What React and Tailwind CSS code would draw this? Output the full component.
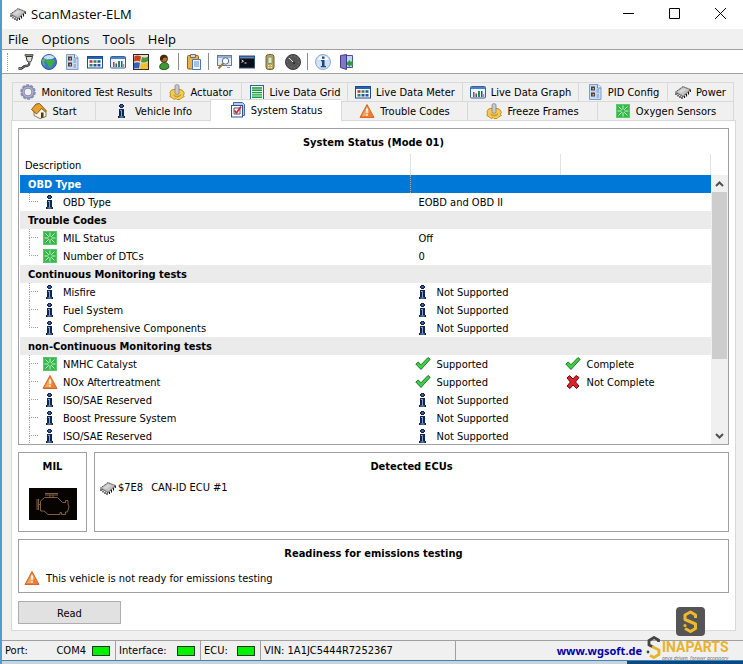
import { useState } from 'react';
import clsx from 'clsx';

const ChipIcon = () => (
  <svg width="16" height="16" viewBox="0 0 16 16" className="shrink-0">
    <path d="M1 9v2M3 10.500v2M5 12v2M7 13v2M9.500 12v2M11.500 10v2.500M13.500 8v2.500M15.300 5.500v2.500" stroke="#111" strokeWidth="1.100" />
    <path d="M.5 8 8 2.500 15.500 5.500 8 13z" fill="#8d8d8d" stroke="#2b2b2b" strokeWidth=".8" strokeDasharray="1.200 .8" />
    <path d="M1.500 8 8 3.200 14.500 5.700 8 11.500z" fill="#c4c4c4" />
    <path d="M3 8 8 4.500 11 5.500 6 9z" fill="#d8d8d8" />
  </svg>
);

const PlugIcon = () => (
  <svg width="16" height="16" viewBox="0 0 16 16">
    <path d="M7 .5h8v1.500H7z" fill="#bdbbae" stroke="#444" strokeWidth=".8" />
    <path d="M8 2.500h6.500L13.500 6.500 12.500 8h-2.500L9 6.500z" fill="#dedccf" stroke="#333" />
    <path d="M11.300 8.500c0 3-1 3.500-4 3.500-2 0-2 2-4 2.500H.5" fill="none" stroke="#222" strokeWidth="2.400" />
    <path d="M11.300 8.500c0 3-1 3.500-4 3.500-2 0-2 2-4 2.500H1" fill="none" stroke="#aaa" strokeWidth=".8" />
  </svg>
);

const GlobeIcon = () => (
  <svg width="16" height="16" viewBox="0 0 16 16">
    <circle cx="8" cy="8" r="7.500" fill="#3d74d6" stroke="#35569a" />
    <path d="M2.500 4c2-3.500 8-4 11-.5L11 5 6 5.500z" fill="#c9def8" />
    <path d="M5 6.500 8 5.500l5 .5 1 1.500-2 2-2 4.500-2-.5L7 10.500 5 8.500z" fill="#3fae3b" />
    <path d="M1 6l2-1.500 1.500 1L3 8l1.500 4L2 10.500z" fill="#58c04a" />
  </svg>
);

const DocIcon = () => (
  <svg width="16" height="16" viewBox="0 0 16 16" className="shrink-0">
    <path d="M2.500.5h8.500l3 3v12H2.500z" fill="#c7dcf3" stroke="#7f9fc8" />
    <path d="M10.500.5v3.500h3.500" fill="#fff" stroke="#5f86b5" />
    <path d="M4 2.500h4v4H4zM4 8.500h4v4H4z" fill="#4d4040" />
    <path d="M5.500 4h1.500v1.500H5.500zM5.500 10h1.500v1.500H5.500z" fill="#e5a590" />
    <path d="M9.500 6H12M9.500 8H12M9.500 11H12M9.500 13H12" stroke="#6d94c4" />
  </svg>
);

const MeterIcon = () => (
  <svg width="16" height="16" viewBox="0 0 16 16" className="shrink-0">
    <rect x=".5" y="2.500" width="15" height="11.500" fill="#f6f9fd" stroke="#1d4a8c" />
    <path d="M1 3h14v2H1z" fill="#2a62b4" />
    <path d="M2.500 6.200h3v2.600h-3z" fill="#c23b32" />
    <path d="M6.500 6.200h3v2.600h-3zM2.500 10h3v2.600h-3z" fill="#2b8a5c" />
    <path d="M10.500 6.200h3v2.600h-3zM6.500 10h3v2.600h-3zM10.500 10h3v2.600h-3z" fill="#27549c" />
  </svg>
);

const GraphIcon = () => (
  <svg width="16" height="16" viewBox="0 0 16 16" className="shrink-0">
    <rect x=".5" y="2.500" width="15" height="11.500" rx="1" fill="#eef4fb" stroke="#355f9b" />
    <path d="M1 3h14v2H1z" fill="#4f82c4" />
    <path d="M3 8h1.500v5H3z" fill="#c23b32" />
    <path d="M5.500 9.500H7V13H5.500zM11 7h1.500v6H11z" fill="#27549c" />
    <path d="M8 7h2v6H8z" fill="#2b8a3c" />
    <path d="M13 10h1.200v3H13z" fill="#d19020" />
  </svg>
);

const FlagIcon = () => (
  <svg width="16" height="16" viewBox="0 0 16 16">
    <rect x=".5" y=".5" width="15" height="15" fill="#e9dfc6" stroke="#2e2620" />
    <path d="M1.500 2c2.500-1 4.500-.5 6.500.5L7 7.500C5 6.500 3.500 6.500 1 7.500z" fill="#c9401f" />
    <path d="M9 3c2 1 4 1 6-.5V7c-2 1.500-4.500 2-7 1z" fill="#4d9a35" />
    <path d="M1 9c2.500-1 4-1 6 0l-1 5.500c-2-.5-3-.5-5 0z" fill="#2f62b8" />
    <path d="M8 9c2.500 1 5 .5 7-1v6.500c-3 1-5 1-8 0z" fill="#efc02c" />
  </svg>
);

const UserIcon = () => (
  <svg width="16" height="16" viewBox="0 0 16 16">
    <path d="M4 14.500c-1-4 1.500-6 4.500-6s5 2 4 5.500c-2 2-6.500 2-8.500.5z" fill="#3f9a35" stroke="#1f5a1d" />
    <circle cx="8" cy="4.800" r="3.500" fill="#b5723a" stroke="#5a2f12" />
    <path d="M4 6C3.500 2 6 .5 8.500.7 11 1 12 3 11 4 9 3 7 3 6.500 6.500z" fill="#4a2710" />
  </svg>
);

const ClipboardIcon = () => (
  <svg width="16" height="16" viewBox="0 0 16 16">
    <rect x="1.500" y="1.500" width="11" height="13.500" rx="1" fill="#efb23f" stroke="#946014" />
    <path d="M4.500.5h5v3h-5z" fill="#d7d7d7" stroke="#6e6e6e" />
    <path d="M6.500 5.500h8v10h-8z" fill="#eef4fc" stroke="#4a74ad" />
    <path d="M8 8h5M8 10h5M8 12h5" stroke="#5f8ecb" />
  </svg>
);

const MonitorSearchIcon = () => (
  <svg width="16" height="16" viewBox="0 0 16 16">
    <rect x="1.500" y="1.500" width="14" height="10" fill="#dfeaf4" stroke="#6a7b8c" />
    <path d="M2 2h13v2H2z" fill="#8fb2d6" />
    <circle cx="9.500" cy="7" r="3.200" fill="#f4fbff" stroke="#5b6f85" />
    <path d="M7.300 9.500 2.500 14.500" stroke="#9a7b45" strokeWidth="2" />
    <path d="M11 13.500h3" stroke="#8a98a6" />
  </svg>
);

const TerminalIcon = () => (
  <svg width="16" height="16" viewBox="0 0 16 16">
    <rect x=".5" y="2" width="15" height="12" fill="#0c1119" stroke="#33507c" />
    <path d="M1 2.500h14v2H1z" fill="#5a86c4" />
    <path d="m2.500 6 2 1.200-2 1.200M5.500 9h2" fill="none" stroke="#e5e5e5" />
  </svg>
);

const PhoneIcon = () => (
  <svg width="16" height="16" viewBox="0 0 16 16">
    <rect x="4" y=".5" width="8" height="15" rx="2.500" fill="#b9a565" stroke="#6d5d2b" />
    <rect x="6" y="3" width="4" height="6.500" rx="1" fill="#dbe9cf" stroke="#6c8a55" strokeWidth=".8" />
    <path d="M6 11.500h4M6 13.500h4" stroke="#efe4b8" strokeDasharray="1.500 1" />
  </svg>
);

const GaugeIcon = () => (
  <svg width="16" height="16" viewBox="0 0 16 16">
    <circle cx="8" cy="8" r="7.500" fill="#555" stroke="#3a3a3a" />
    <circle cx="8" cy="8" r="5.800" fill="none" stroke="#858585" strokeDasharray="1 2.500" />
    <path d="m4 4 5 5" stroke="#e6e6e6" />
    <circle cx="9" cy="9" r="1.200" fill="#333" />
  </svg>
);

const InfoCircleIcon = () => (
  <svg width="16" height="16" viewBox="0 0 16 16">
    <circle cx="8" cy="8" r="7.500" fill="#cfe1f2" stroke="#93abc4" />
    <path d="M2.500 5.500c2-5 9-5 11 0-3 1-8 1-11 0z" fill="#f5faff" />
    <path d="M7 2.500h2.500v2.300H7zM6 6h3.500v6H11v1.200H5.800V12H7V7.200H6z" fill="#1c4587" />
  </svg>
);

const ExitIcon = () => (
  <svg width="16" height="16" viewBox="0 0 16 16">
    <path d="M6.500 1.500h8v12h-8z" fill="#bcd5f0" stroke="#4b4d9c" />
    <path d="m2.500 1.500 6-1v15l-6-2z" fill="#8177c6" stroke="#433b86" />
    <path d="M9 8.500 12 6v1.500h3v4h-3V13l-3-2.500z" fill="#2f9b3a" />
  </svg>
);

const GearIcon = () => (
  <svg width="16" height="16" viewBox="0 0 16 16" className="shrink-0">
    <circle cx="8" cy="8" r="6.800" fill="none" stroke="#8d92b4" strokeWidth="2" strokeDasharray="3 1.270" />
    <circle cx="8" cy="8" r="5" fill="none" stroke="#8489ad" strokeWidth="3.400" />
    <circle cx="8" cy="8" r="4.800" fill="none" stroke="#a9aecd" strokeWidth="1.600" />
  </svg>
);

const ActuatorIcon = () => (
  <svg width="16" height="16" viewBox="0 0 16 16" className="shrink-0">
    <path d="m1 8.500 1.500-2.500L5 5.500 8 5l3 .5 2.500.8L15.300 9l-.8 2.500.8 1-2.800 1.500L11 15.500H8l-1-1-2 1-1.500-1.500L.8 12.500l.7-1.500z" fill="#f3cc55" stroke="#b98618" strokeWidth=".9" />
    <path d="M4.500 9.500c1 3 6 3 7.500 0v2c-2 2.500-6 2.500-7.500 0z" fill="#d09b28" />
    <rect x="6" y=".7" width="4" height="9.500" rx="1.500" fill="#c9c9cc" stroke="#808086" strokeWidth=".8" />
  </svg>
);

const GridIcon = () => (
  <svg width="16" height="16" viewBox="0 0 16 16" className="shrink-0">
    <rect x="1.500" y="1.500" width="13" height="14" fill="#f4fff4" stroke="#2f5f9d" />
    <path d="M3 4h10M3 6.300h10M3 8.600h10M3 10.900h10M3 13.200h10" stroke="#14963a" strokeWidth="1.400" />
  </svg>
);

const HomeIcon = () => (
  <svg width="16" height="16" viewBox="0 0 16 16" className="shrink-0">
    <path d="m6.500 8 4.500-3.500L15 9v4.500l-6 2-6-3V7z" fill="#f7f4e6" stroke="#6c5a33" strokeWidth=".8" />
    <path d="M.5 6.500 5 1l3.500-.5L15.500 8l-1 1-4-3.500L7 9.500 5.500 11z" fill="#e5a12a" stroke="#6b4108" strokeWidth=".8" />
    <path d="M10 9.500h2.500v5L10 15z" fill="#4e3a1c" />
  </svg>
);

const InfoIcon = () => (
  <svg width="16" height="16" viewBox="0 0 16 16" className="shrink-0">
    <path d="M6 1h3v1h1v2H9v1H6V4H5V2h1z" fill="#10244f" />
    <path d="M5 6h5v7h1v2H4v-2h1z" fill="#10244f" />
    <path d="M6.500 3h2M6 7.500h2M7.500 7v6.500M5.500 14h4" fill="none" stroke="#7fa6d8" />
  </svg>
);

const StatusIcon = () => (
  <svg width="16" height="16" viewBox="0 0 16 16" className="shrink-0">
    <path d="M3.500.5h9l2 2v11h-11z" fill="#b7cbe8" stroke="#4666a0" />
    <rect x="1.500" y="3.500" width="11" height="11.500" fill="#fdfdff" stroke="#33508c" />
    <path d="M4 6h6v6H4z" fill="none" stroke="#4f5570" />
    <path d="m4.500 8.500 2 2.500 4.500-6.500" fill="none" stroke="#d0202c" strokeWidth="1.600" />
  </svg>
);

const WarningIcon = () => (
  <svg width="16" height="16" viewBox="0 0 16 16" className="shrink-0">
    <path d="M8 1.500 15 14.500H1z" fill="#ec7f33" stroke="#cf6a26" strokeLinejoin="round" />
    <path d="M8 3.500 10.500 8 8 13H3z" fill="#f4a564" />
    <path d="M7 5.500h2l-.4 4.500H7.400zM7.200 11.200h1.600v1.600H7.200z" fill="#fff" />
  </svg>
);

const GreenIcon = () => (
  <svg width="16" height="16" viewBox="0 0 16 16" className="shrink-0">
    <rect x="1.500" y="1.500" width="13" height="13" fill="#36b84a" stroke="#5cc76a" />
    <path d="M8 2.500v4M8 9.500v4M2.500 8h4M9.500 8h4M3.500 3.500l3.300 3.300M9.200 9.200l3.300 3.300M12.500 3.500 9.200 6.800M6.800 9.200l-3.300 3.300" stroke="#c6f0c8" />
  </svg>
);

const CheckIcon = () => (
  <svg width="16" height="16" viewBox="0 0 16 16" className="shrink-0">
    <path d="m.8 8 2.500-2L6 8.800 13 1.500l2.200 1.800L6 13.500z" fill="#3fce48" stroke="#126a1b" strokeWidth=".9" />
  </svg>
);

const CrossIcon = () => (
  <svg width="16" height="16" viewBox="0 0 16 16" className="shrink-0">
    <path d="M2 4 4.500 1.500 8 5l3-3.500L14 3.500 10.500 8l3.500 4-2.500 2.500L8 11l-3 3.500L2 12.200 5.300 8z" fill="#d8232c" stroke="#6d0c12" />
  </svg>
);

const EngineIcon = () => (
  <svg width="48" height="32" viewBox="0 0 48 32" className="bg-[#060300]">
    <path d="M16 5.500h13M16 7h13M21 7v3M24 7v3M8 11v11M9.500 11v11M10 16.500h2M11.500 13l4-3.500h13l5 5h3v-2h2.500v3.500l1 3-1.500 5h-2v2.500h-4v-2h-1.500v2H19l-4-3.500h-3.500z" fill="none" stroke="#82603a" />
  </svg>
);

const menus = ['File', 'Options', 'Tools', 'Help'];

const toolGroups = [
  [
    ['Connect', PlugIcon],
    ['Web', GlobeIcon],
    ['Configuration', DocIcon],
    ['Data meter', MeterIcon],
    ['Data graph', GraphIcon],
    ['Windows', FlagIcon],
    ['User', UserIcon],
  ],
  [['Clipboard', ClipboardIcon]],
  [
    ['Monitor', MonitorSearchIcon],
    ['Terminal', TerminalIcon],
    ['Device', PhoneIcon],
    ['Gauge', GaugeIcon],
  ],
  [
    ['About', InfoCircleIcon],
    ['Exit', ExitIcon],
  ],
];

const upperTabs = [
  ['Monitored Test Results', GearIcon],
  ['Actuator', ActuatorIcon],
  ['Live Data Grid', GridIcon],
  ['Live Data Meter', MeterIcon],
  ['Live Data Graph', GraphIcon],
  ['PID Config', DocIcon],
  ['Power', ChipIcon],
];

const lowerTabs = [
  ['Start', HomeIcon],
  ['Vehicle Info', InfoIcon],
  ['System Status', StatusIcon],
  ['Trouble Codes', WarningIcon],
  ['Freeze Frames', ActuatorIcon],
  ['Oxygen Sensors', GreenIcon],
];

const notSupported = [InfoIcon, 'Not Supported'];
const supported = [CheckIcon, 'Supported'];

const rows = [
  { group: 'OBD Type' },
  { icon: InfoIcon, name: 'OBD Type', value: [null, 'EOBD and OBD II'], last: true },
  { group: 'Trouble Codes' },
  { icon: GreenIcon, name: 'MIL Status', value: [null, 'Off'] },
  { icon: GreenIcon, name: 'Number of DTCs', value: [null, '0'], last: true },
  { group: 'Continuous Monitoring tests' },
  { icon: InfoIcon, name: 'Misfire', value: notSupported },
  { icon: InfoIcon, name: 'Fuel System', value: notSupported },
  { icon: InfoIcon, name: 'Comprehensive Components', value: notSupported, last: true },
  { group: 'non-Continuous Monitoring tests' },
  { icon: GreenIcon, name: 'NMHC Catalyst', value: supported, result: [CheckIcon, 'Complete'] },
  { icon: WarningIcon, name: 'NOx Aftertreatment', value: supported, result: [CrossIcon, 'Not Complete'] },
  { icon: InfoIcon, name: 'ISO/SAE Reserved', value: notSupported },
  { icon: InfoIcon, name: 'Boost Pressure System', value: notSupported },
  { icon: InfoIcon, name: 'ISO/SAE Reserved', value: notSupported },
];

const Tab = ({ label, icon: Icon, active, onClick }) => (
  <button
    role="tab"
    aria-selected={active}
    onClick={onClick}
    className={clsx(
      'flex items-center justify-center gap-[5px] whitespace-nowrap border-l border-t border-[#d9d9d9]',
      active ? 'relative -mt-0.5 -mb-px bg-white pb-0.5' : 'bg-[#f0f0f0]'
    )}
  >
    <Icon />
    <span className="pt-0.5">{label}</span>
  </button>
);

const Cell = ({ data }) => {
  if (!data) return null;
  const [Icon, text] = data;
  if (!Icon) return <div className="pt-0.5 pl-2">{text}</div>;
  return (
    <div className="flex items-center gap-1.5 pl-1">
      <Icon />
      <span className="pt-0.5">{text}</span>
    </div>
  );
};

const StatusTable = () => {
  const [selected, setSelected] = useState(0);

  return (
    <table className="w-full table-fixed border-collapse text-left">
      <thead>
        <tr className="h-[21px]">
          <th className="border-r border-[#e2e2e2] p-0 pt-0.5 pl-[5px] font-normal">Description</th>
          <th className="w-[150px] border-r border-[#e2e2e2]"></th>
          <th className="w-[150px] border-r border-[#e2e2e2]"></th>
        </tr>
      </thead>
      <tbody>
        {rows.map((row, i) =>
          row.group ? (
            <tr
              key={i}
              onClick={() => setSelected(i)}
              className={clsx('h-[18px] font-bold', selected === i ? 'bg-[#0078d7] text-white' : 'bg-[#ebebeb]')}
            >
              <td className={clsx('p-0 pt-0.5 pl-2', selected === i && 'border-r border-dotted border-[#c9a27c]')}>
                {row.group}
              </td>
              <td className="p-0" colSpan={2}></td>
            </tr>
          ) : (
            <tr key={i} className="h-[18px]">
              <td className="p-0">
                <div className="flex h-[18px] items-center pl-[9px]">
                  <span className="mr-1 flex w-[9px] flex-col">
                    <span className="h-[9px] border-b border-l border-dotted border-[#a0a0a0]"></span>
                    <span className={clsx('h-[9px]', !row.last && 'border-l border-dotted border-[#a0a0a0]')}></span>
                  </span>
                  <row.icon />
                  <span className="ml-[5px] truncate pt-0.5">{row.name}</span>
                </div>
              </td>
              <td className="p-0"><Cell data={row.value} /></td>
              <td className="p-0"><Cell data={row.result} /></td>
            </tr>
          )
        )}
      </tbody>
    </table>
  );
};

const ScrollBar = () => (
  <div className="mt-[21px] flex w-[17px] shrink-0 flex-col bg-[#f0f0f0]">
    <button aria-label="Scroll up" className="flex h-[17px] items-center justify-center">
      <svg width="9" height="6" viewBox="0 0 9 6"><path d="m1 5 3.500-3.500L8 5" fill="none" stroke="#505050" strokeWidth="2" /></svg>
    </button>
    <div className="flex-1">
      <div className="mx-px h-[71%] bg-[#cdcdcd]"></div>
    </div>
    <button aria-label="Scroll down" className="flex h-[17px] items-center justify-center">
      <svg width="9" height="6" viewBox="0 0 9 6"><path d="m1 1 3.500 3.500L8 1" fill="none" stroke="#505050" strokeWidth="2" /></svg>
    </button>
  </div>
);

const Heading = ({ children }) => <h2 className="text-center font-bold">{children}</h2>;

const Led = () => <span className="h-2.5 w-[18px] border border-[#1c3c1c] bg-[#00f000]"></span>;

const Watermark = () => (
  <div className="pointer-events-none absolute right-1.5 bottom-0.5 flex w-[91px] flex-col">
    <svg width="29" height="29" viewBox="0 0 29 29" className="ml-[30px]">
      <rect width="29" height="29" rx="4" fill="#555" />
      <path d="M19.500 11V8L14.500 5 9 8v4.500l10.500 4.500v4.500l-5 3L9 21.500" fill="none" stroke="#f0b92c" strokeWidth="3" strokeLinejoin="round" />
      <circle cx="9" cy="18.500" r="1.600" fill="#f0b92c" />
    </svg>
    <div className="flex items-start">
      <svg width="16" height="23" viewBox="0 0 16 23">
        <path d="M12.500 6V4L8 1.500 3 4.500V9l4 2" fill="none" stroke="#444" strokeWidth="2.800" />
        <path d="m6 10.500 7 3.500v4.500L8 21.500l-4-2" fill="none" stroke="#e9b22d" strokeWidth="2.800" />
        <circle cx="2" cy="16" r="1.400" fill="#444" />
      </svg>
      <div className="pt-[3px]">
        <div className="font-[Roboto,sans-serif] text-sm leading-4 font-bold text-[#e9b22d]">INAPARTS</div>
        <div className="font-['Open_Sans',sans-serif] text-[5px] leading-[7px] whitespace-nowrap text-[#666] italic">once driven, forever accessory</div>
      </div>
    </div>
  </div>
);

export default function App() {
  const [tab, setTab] = useState('System Status');

  return (
    <div className="relative flex h-screen flex-col border-l-2 border-[#4f9bd2] bg-[#f0f0f0] font-['DejaVu_Sans_Condensed','DejaVu_Sans',sans-serif] text-[11px] leading-4 text-black">
      <header className="flex h-[29px] shrink-0 items-center bg-white pb-0.5 pl-2 font-['Open_Sans',sans-serif]">
        <ChipIcon />
        <h1 className="ml-[5px] flex-1 text-[13px]">ScanMaster-ELM</h1>
        <button aria-label="Minimize" className="flex w-[46px] justify-center">
          <svg width="11" height="11"><path d="M0 5.500h11" stroke="#000" /></svg>
        </button>
        <button aria-label="Maximize" className="flex w-[46px] justify-center">
          <svg width="11" height="11"><path d="M.5.5h10v10H.5z" fill="none" stroke="#000" /></svg>
        </button>
        <button aria-label="Close" className="flex w-[46px] justify-center">
          <svg width="11" height="11"><path d="m0 0 11 11M11 0 0 11" stroke="#000" /></svg>
        </button>
      </header>

      <nav className="flex h-5 shrink-0 items-center gap-[13px] pl-1.5 font-['Open_Sans',sans-serif] text-[13px]">
        {menus.map((m) => (
          <button key={m}>{m}</button>
        ))}
      </nav>

      <div className="flex h-[25px] shrink-0 items-center border-y border-[#a0a0a0] bg-white pl-[5px]">
        <span className="mr-1.5 h-[18px] border-l border-dotted border-[#999]"></span>
        {toolGroups.map((group, g) => (
          <div key={g} className="flex items-center">
            {g > 0 && <span className="mx-[3px] h-[17px] w-px bg-[#8c8c8c]"></span>}
            {group.map(([name, Icon]) => (
              <button key={name} aria-label={name} className="flex w-[23px] justify-center">
                <Icon />
              </button>
            ))}
          </div>
        ))}
      </div>

      <main className="flex min-h-0 flex-1 flex-col pt-2 pr-[7px] pb-[9px] pl-[9px]">
        <div role="tablist" className="mr-0.5 ml-px shrink-0">
          <div className="grid h-[19px] grid-cols-[148fr_81fr_106fr_115fr_116fr_89fr_66fr] border-r border-[#d9d9d9]">
            {upperTabs.map(([label, icon]) => (
              <Tab key={label} label={label} icon={icon} active={tab === label} onClick={() => setTab(label)} />
            ))}
          </div>
          <div className="grid h-[19px] grid-cols-[83fr_115fr_131fr_126fr_130fr_136fr] border-r border-[#d9d9d9]">
            {lowerTabs.map(([label, icon]) => (
              <Tab key={label} label={label} icon={icon} active={tab === label} onClick={() => setTab(label)} />
            ))}
          </div>
        </div>

        <div className="flex min-h-0 flex-1 flex-col border border-[#d9d9d9] bg-white px-1.5 pt-[7px] pb-1.5">
          <section className="flex min-h-0 flex-1 flex-col border border-[#a0a0a0]">
            <div className="h-[25px] shrink-0 pt-1.5">
              <Heading>System Status (Mode 01)</Heading>
            </div>
            <div className="flex min-h-0 flex-1 pl-px">
              <div className="min-w-0 flex-1 overflow-hidden">
                <StatusTable />
              </div>
              <ScrollBar />
            </div>
          </section>

          <div className="mt-[7px] flex h-20 shrink-0 gap-[7px]">
            <section className="flex w-[69px] flex-col items-center gap-[13px] border border-[#a0a0a0] pt-1.5">
              <Heading>MIL</Heading>
              <EngineIcon />
            </section>
            <section className="flex-1 border border-[#a0a0a0] px-[5px] pt-1.5">
              <Heading>Detected ECUs</Heading>
              <div className="mt-[3px] flex items-center pt-0.5">
                <ChipIcon />
                <span className="ml-0.5">$7E8</span>
                <span className="ml-2">CAN-ID ECU #1</span>
              </div>
            </section>
          </div>

          <section className="mt-[7px] h-[54px] shrink-0 border border-[#a0a0a0] px-[5px] pt-1.5">
            <Heading>Readiness for emissions testing</Heading>
            <p className="mt-[7px] flex items-center gap-1.5">
              <WarningIcon />
              <span className="pt-0.5">This vehicle is not ready for emissions testing</span>
            </p>
          </section>

          <button className="mt-2 h-[23px] w-[103px] shrink-0 border border-[#adadad] bg-[#e1e1e1] pt-0.5">Read</button>
        </div>
      </main>

      <footer className="flex h-5 shrink-0 items-stretch border-t border-[#a0a0a0]">
        <div className="flex w-[114px] items-center gap-1.5 border-r border-[#a0a0a0] pr-[5px] pl-[3px]">
          <span className="flex-1">Port:</span>
          <span>COM4</span>
          <Led />
        </div>
        <div className="flex w-[85px] items-center justify-between border-r border-[#a0a0a0] pr-[5px] pl-[3px]">
          Interface: <Led />
        </div>
        <div className="flex w-[60px] items-center justify-between border-r border-[#a0a0a0] pr-[5px] pl-[3px]">
          ECU: <Led />
        </div>
        <div className="flex w-[195px] items-center border-r border-[#a0a0a0] pl-[3px]">VIN: 1A1JC5444R7252367</div>
        <div className="flex flex-1 items-center justify-end pr-[101px]">
          <a href="#wgsoft" className="font-['Noto_Sans',sans-serif] font-bold text-[#0000a8]">www.wgsoft.de</a>
        </div>
      </footer>
      <div className="flex h-1 shrink-0 border-t border-[#3a87c0] bg-[#c9d3da]">
        <span className="ml-auto w-[116px] bg-[#0b4a80]"></span>
      </div>
      <Watermark />
    </div>
  );
}
